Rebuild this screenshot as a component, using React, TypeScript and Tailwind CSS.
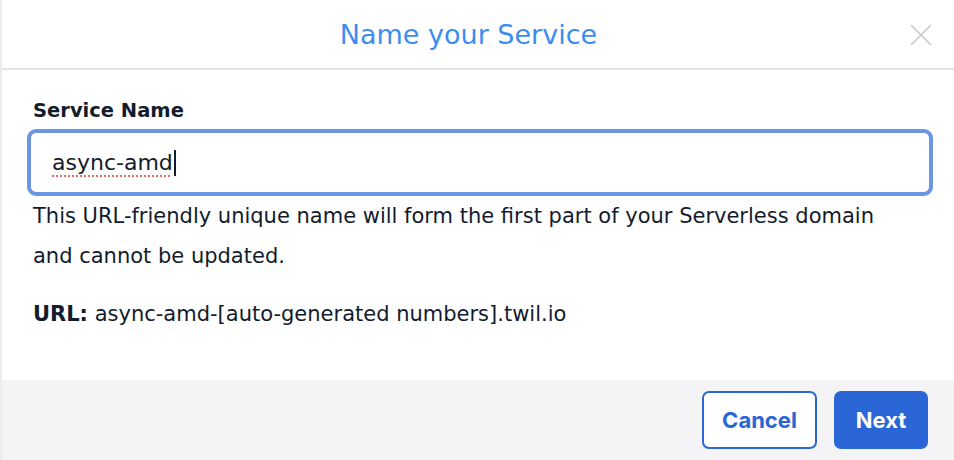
const App = () => {
    return (
        <div className="w-[954px] h-[460px] bg-white flex flex-col border-l-2 border-[#ececec] font-['DejaVu_Sans',sans-serif]">
            <div className="h-[70px] flex items-center justify-center relative border-b-2 border-[#e4e4e4]">
                <h1 className="text-[27px] font-normal text-[#3b8ef0] leading-none pr-[19px]">Name your Service</h1>
                <button className="absolute right-[20px] top-[22px] w-[26px] h-[26px] text-[#c9c9c9]">
                    <svg viewBox="0 0 26 26" className="w-[26px] h-[26px]" fill="none" stroke="currentColor" strokeWidth="1.6">
                        <path d="M3 3 L23 23 M23 3 L3 23" />
                    </svg>
                </button>
            </div>
            <div className="flex-1 px-[31px] pt-[28px]">
                <label className="block text-[19.5px] font-bold text-[#121c2d] leading-[26px]">Service Name</label>
                <div className="mt-[5px] -ml-[6px] w-[906px] h-[67px] border-4 border-[#6a96e4] rounded-[9px] flex items-center pl-[21px]">
                    <span className="text-[22px] text-[#121c2d] underline decoration-dotted decoration-[#e66a6a] decoration-2 underline-offset-[5px]">async-amd</span>
                    <span className="w-[2px] h-[26px] bg-[#121c2d] ml-[1px]" />
                </div>
                <p className="mt-0 text-[21px] leading-[40px] text-[#121c2d]">
                    This URL-friendly unique name will form the first part of your Serverless domain<br />and cannot be updated.
                </p>
                <p className="mt-[18px] text-[21px] leading-[40px] text-[#121c2d]">
                    <span className="font-bold">URL:</span> async-amd-[auto-generated numbers].twil.io
                </p>
            </div>
            <div className="h-[80px] bg-[#f4f4f6] flex items-center justify-end gap-[17px] pr-[26px] font-['Inter',sans-serif]">
                <button className="w-[115px] h-[58px] rounded-[7px] border-2 border-[#2a66d6] bg-white text-[#2a66d6] text-[22px] font-bold">Cancel</button>
                <button className="w-[94px] h-[58px] rounded-[7px] bg-[#2a66d6] text-white text-[22px] font-bold">Next</button>
            </div>
        </div>
    )
}

export default App
